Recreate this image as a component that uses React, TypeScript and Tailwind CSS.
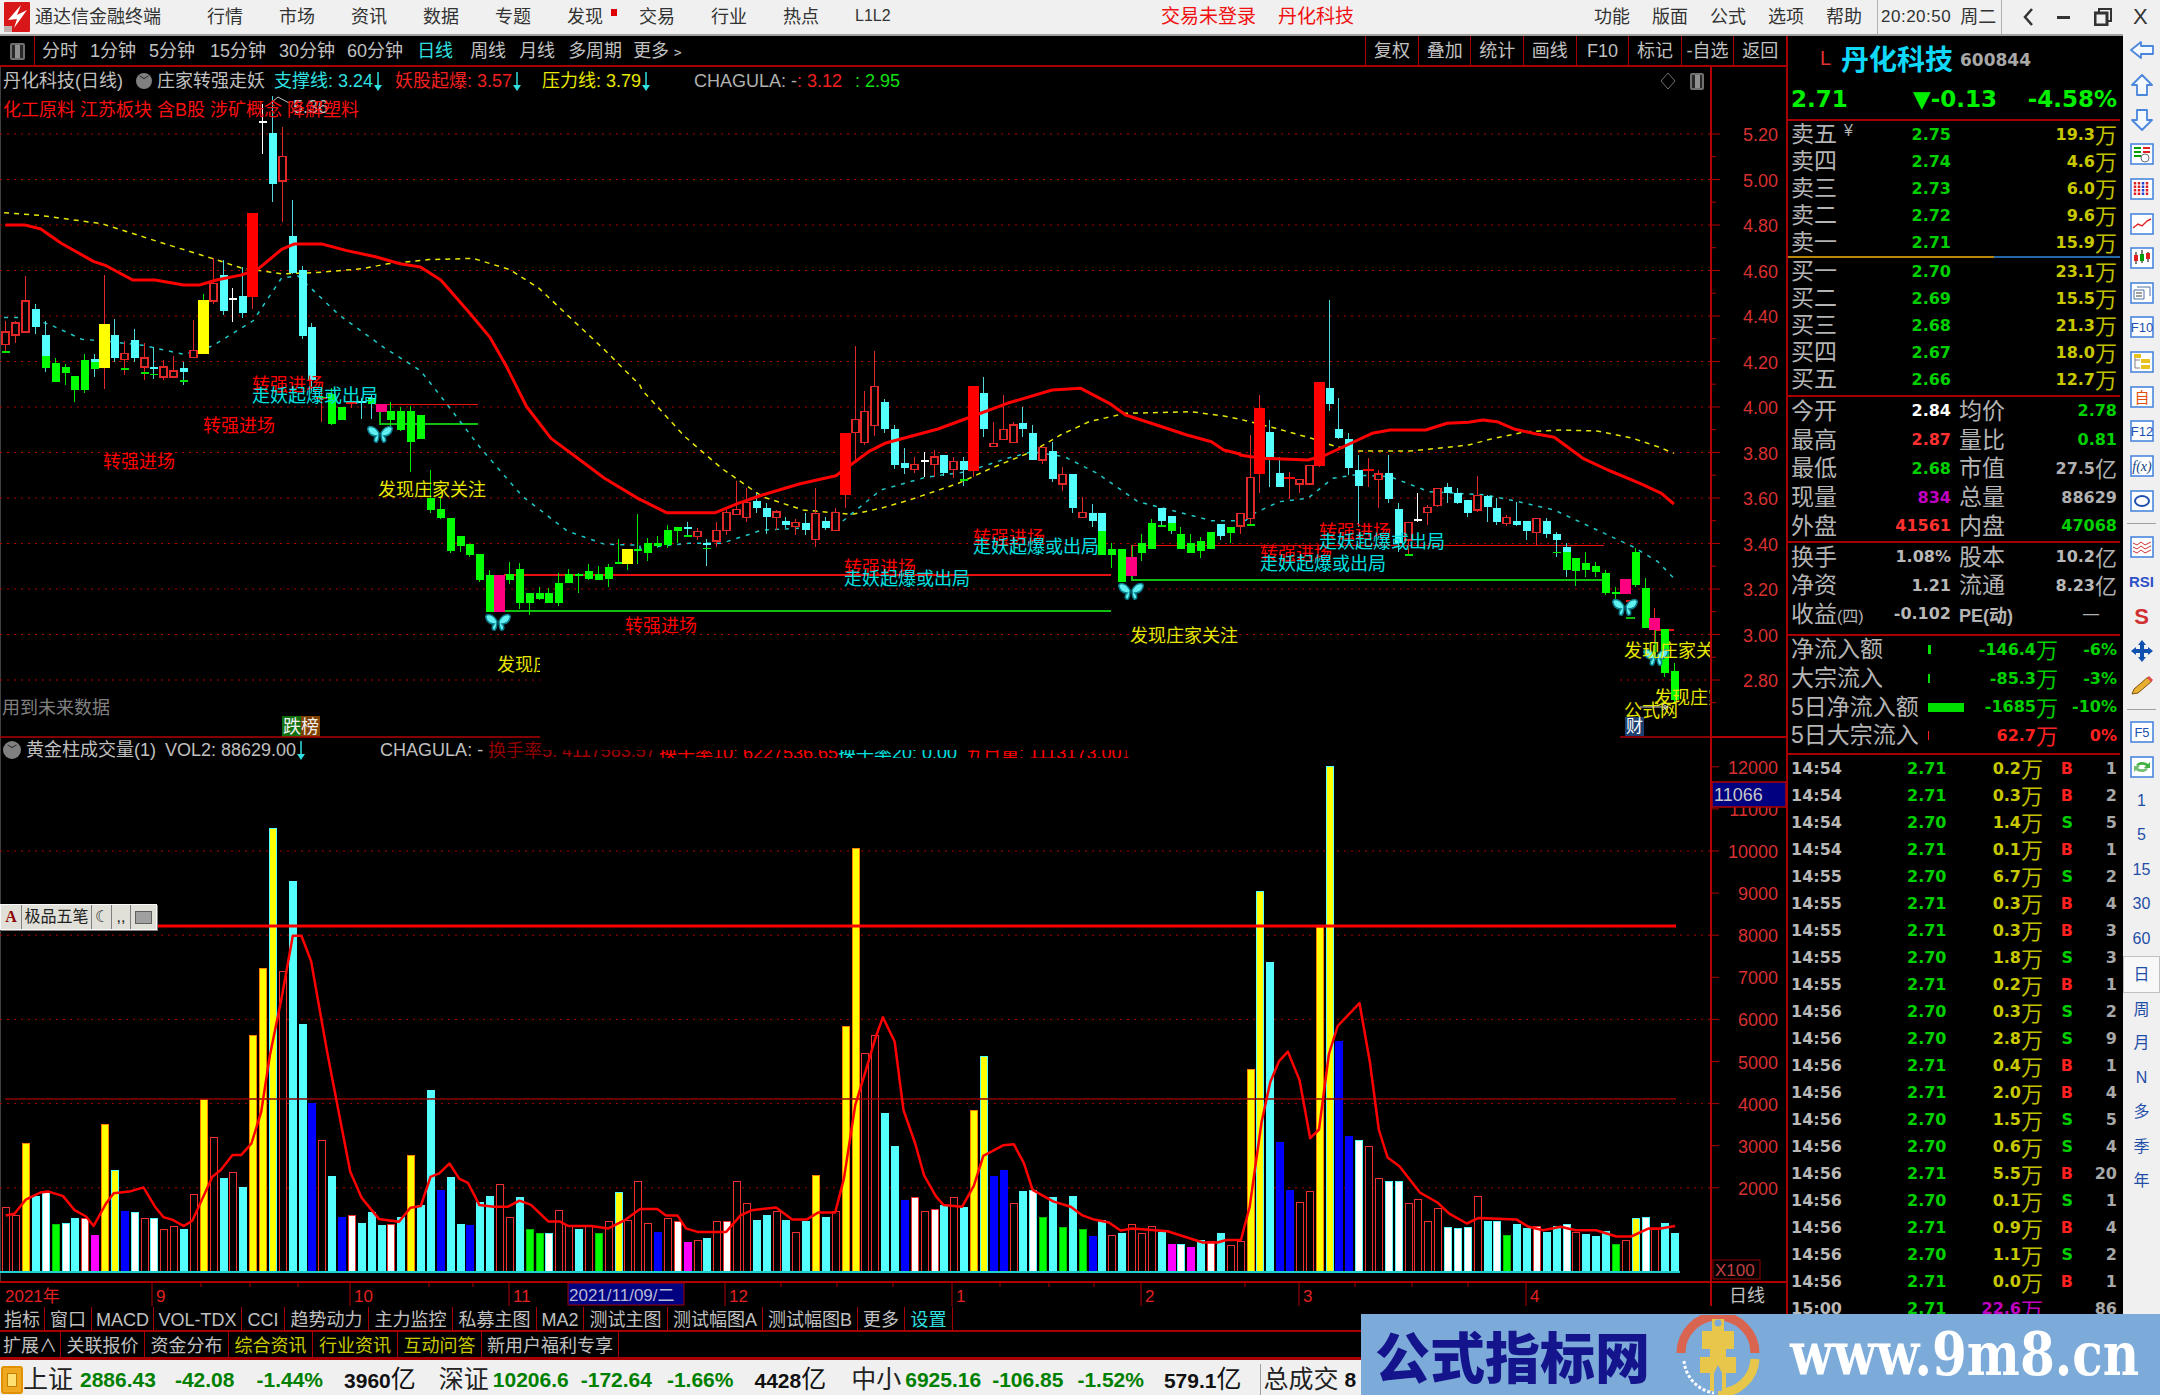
import React from "react";

type C = [string, number, number, number, number, number?, number?];

const A: C[] = [
  ["r",590,618,648,668,665],["r",590,595,625,645],["r",481,541,618,620],["c",550,562,605,622],["x",590,624,705,715,0,676],
  ["g",680,694,740,740],["g",695,702,719,748],["g",725,725,760,788],["g",672,686,760,767],["x",672,684,707,727,0,690],
  ["y",478,598,705,758],["c",585,625,680,690],["r",640,670,685,722,706],["c",610,636,682,690],["r",645,681,703,735,716],
  ["c",655,702,706,733,720],["r",685,703,728,735],["r",675,713,728,730],["c",692,706,716,748,736],["r",587,663,680,680],
  ["Y",525,540,671,671],["r",437,498,541,548],["c",442,478,565,575],["w",510,535,537,593],["c",458,530,572,583],
  ["s",326,326,531,560],["w",60,100,102,182],["c",40,131,255,300],["r",115,188,247,347],["c",295,381,474,475],
  ["c",455,466,626,635],["c",595,606,735,760],["s",760,776,778,838,776],["g",755,770,843,845],["g",800,800,833,833],
  ["s",775,790,792,803],["c",780,786,788,830],["x",770,780,795,830,0,782],["p",794,794,814,814],["g",790,812,833,848],
  ["g",800,812,858,860],["g",798,812,887,960],["g",820,820,880,880],["g",955,1025,1053,1060],["g",1020,1050,1072,1075],
  ["g",1073,1073,1153,1160],["g",1117,1117,1142,1157],["g",1138,1138,1164,1168],["g",1161,1161,1226,1230],["g",1200,1212,1303,1303],
  ["p",1212,1212,1303,1303],["g",1180,1210,1226,1235],["g",1183,1198,1282,1295],["g",1257,1257,1282,1310],["g",1242,1257,1272,1275],
  ["g",1245,1257,1282,1282],["g",1208,1232,1282,1288],["g",1198,1210,1233,1233],["g",1208,1210,1212,1257],["g",1185,1202,1222,1225],
  ["g",1190,1210,1226,1226],["g",1185,1192,1222,1242],["g",1125,1180,1186,1186],["Y",1150,1150,1186,1200],["g",1063,1148,1152,1185],
];
const B: C[] = [
  ["g",775,790,820,843],["g",768,790,798,805],["g",735,750,795,805],["g",741,741,752,790],["c",727,741,748,768,765],
  ["r",745,755,770,780],["c",778,788,792,857,803],["r",727,751,783,802],["r",690,697,752,765],["r",603,688,703,705],
  ["r",625,668,712,725],["c",640,662,685,698],["c",670,683,712,762],["r",690,696,712,750],["c",710,722,735,745],
  ["r",718,728,740,765],["c",700,728,750,765],["r",625,700,778,802],["c",710,722,745,750],["r",685,697,752,752],
  ["s",458,458,645,685],["r",197,418,458,540],["r",332,395,487,495],["r",214,319,436,468],["c",358,367,447,460],
  ["c",434,448,555,568],["c",503,550,565,582],["r",530,553,568,578],["w",516,539,541,592],["r",510,531,553,590],
  ["c",525,525,578,588],["r",530,545,568,595],["c",530,543,570,618,598],["s",318,318,572,590],["c",290,340,447,470],
  ["r",425,490,500,500],["r",345,449,478,478],["r",425,435,487,487],["c",380,430,447,470],["c",435,458,540,540],
  ["r",503,503,540,552],["c",487,512,597,605],["r",560,583,612,632],["c",583,583,685,700],["r",650,697,712,712],
  ["c",673,700,722,740],["x",700,700,826,826,0,752],["g",790,808,825,865],["g",808,808,905,905],["p",795,830,888,888],
  ["g",763,790,820,843],["g",718,728,808,808],["c",683,683,722,738,735],["x",708,708,752,762,0,730],["g",740,763,807,807],
  ["g",763,790,820,820],["g",770,782,812,835],["g",755,755,807,807],["c",733,733,767,780],["g",740,740,758,790],
  ["r",700,700,738,762],
];
const D: C[] = [
  ["r",465,592,715,735,732],["s",345,384,582,640],["c",420,457,530,622],["c",530,578,620,622],["s",575,592,598,658],
  ["r",597,598,612,640],["r",557,557,612,615],["s",305,305,558,560],["c",60,325,372,392],["c",355,448,474,476],
  ["c",458,477,565,585],["c",525,570,618,740],["s",535,566,572,620],["r",570,582,598,685],["c",525,578,658,668],
  ["c",668,687,790,815],["r",728,728,780,825,823],["w",640,716,718,725],["r",675,682,698,735],["r",625,625,677,680],
  ["c",610,622,640,668],["c",625,640,668,672],["c",660,660,698,712],["r",588,647,690,697],["c",645,648,680,725],
  ["c",655,683,725,735],["r",705,713,730,738],["c",665,723,735,738],["c",723,723,752,780],["r",715,715,757,795],
  ["c",715,722,762,775],["c",755,763,780,832,815],["x",790,800,870,892,0,815],["g",835,835,873,918],["g",817,848,870,892],
  ["g",845,858,875,892],["g",870,880,938,945],["g",920,935,940,960],["p",898,898,942,942],["g",805,817,915,922],
  ["g",895,925,1045,1045],["p",983,1015,1050,1090],["g",1047,1047,1178,1190],["g",1150,1172,1260,1270],
];

const CANDLES: C[] = [
  ...A.map((c) => conv(c, (z) => 80 + z / 2.45)),
  ...B.map((c) => conv(c, (z) => 280 + z / 3)),
  ...D.map((c) => conv(c, (z) => 280 + z / 3)),
];

function conv(c: C, f: (z: number) => number): C {
  return [c[0], f(c[1]), f(c[2]), f(c[3]), f(c[4]), c[5] ? f(c[5]) : undefined, c[6] ? f(c[6]) : undefined];
}

const VOL =
  "h1331 h1355 o1150 c1300 w1290 g1382 w1377 c1365 W1365 m1412 o1095 Y1228 b1343 w1347 h1365 w1365 h1395 h1387 c1394 h1296 o1025 h1134 c1250 h1233 c1275 o843 o650 Y252 h660 c402 c812 b1035 h1142 c1245 b1360 W1355 c1377 c1347 c1385 W1380 c1360 o1185 c1328 c1000 b1283 c1248 c1382 b1385 c1318 c1300 h1267 h1361 c1305 g1394 g1407 w1407 h1340 h1385 c1394 h1385 g1407 h1373 Y1291 h1370 h1258 h1378 b1403 h1365 W1373 m1432 h1425 c1420 h1373 W1373 h1258 h1322 c1368 c1355 h1345 c1368 h1405 c1372 o1240 c1360 h1345 o817 o308 h893 h843 c1065 c1158 b1313 W1305 h1345 W1338 c1327 h1305 c1333 o1057 Y902 b1245 b1228 h1322 c1287 w1283 g1360 c1305 g1388 c1300 g1394 b1415 c1370 h1412 c1406 h1382 h1406 h1387 c1405 m1437 w1437 m1445 c1425 W1430 c1406 h1442 h1430 o940 Y431 c633 b1147 b1284 h1318 h1288 o533 Y76 b858 b1130 w1140 h1158 h1250 w1257 w1257 h1322 h1310 h1373 h1335 w1390 w1393 w1390 h1301 c1372 w1372 g1412 c1382 c1392 W1387 c1405 c1387 w1382 h1405 c1410 c1416 c1400 g1437 h1425 Y1365 w1360 h1395 c1378 c1406"
    .split(" ")
    .map((s) => ({ t: s[0], y: 740 + Number(s.slice(1)) / 2.85 }));

const VS: Record<string, [string, string]> = {
  h: ["#000000", "#f03030"],
  c: ["#54ffff", "#54ffff"],
  w: ["#ffffff", "#54ffff"],
  W: ["#ffffff", "#f03030"],
  o: ["#ffff00", "#ff8000"],
  Y: ["#ffff00", "#54ffff"],
  b: ["#0000ff", "#0000ff"],
  g: ["#00ff00", "#00c000"],
  m: ["#ff00ff", "#ff00ff"],
};

function pts(list: number[][], fx: (x: number) => number, fy: (y: number) => number) {
  return list.map(([x, y]) => `${fx(x).toFixed(1)},${fy(y).toFixed(1)}`).join(" ");
}
const ax = (z: number) => z / 2.45;
const ay = (z: number) => 80 + z / 2.45;
const bx = (z: number) => 640 + z / 2.45;
const by = (z: number) => 280 + z / 3;
const cx = (z: number) => 1240 + z / 2.8;

function tri(a: number[][], b: number[][], c: number[][]) {
  return [pts(a, ax, ay), pts(b, bx, by), pts(c, cx, by)].join(" ");
}

const RED_MA = tri(
  [[13,355],[60,355],[100,365],[150,400],[230,445],[260,455],[325,490],[380,490],[450,502],[490,502],[530,490],[590,478],[630,465],[690,415],[720,402],[790,402],[850,418],[920,433],[980,450],[1030,458],[1080,490],[1150,570],[1200,630],[1240,700],[1290,800],[1350,878],[1440,945],[1480,975],[1568,1028]],
  [[0,658],[65,698],[185,698],[240,670],[300,645],[390,612],[480,587],[560,515],[600,490],[730,447],[790,420],[900,370],[1010,330],[1080,325],[1150,370],[1190,405],[1260,433],[1340,465],[1400,485],[1430,510],[1470,522]],
  [[0,525],[60,535],[190,540],[240,525],[330,480],[370,460],[420,450],[520,450],[580,430],[640,427],[680,420],[720,425],[770,448],[830,462],[880,472],[960,535],[1030,570],[1120,610],[1180,640],[1215,672]]
);
const YEL_MA = tri(
  [[10,325],[100,332],[250,352],[400,400],[520,437],[590,460],[690,475],[770,472],[890,462],[950,450],[1050,440],[1160,437],[1250,465],[1320,510],[1400,585],[1480,660],[1568,748]],
  [[5,330],[110,470],[200,565],[300,650],[400,690],[520,703],[590,685],[660,660],[780,610],[860,565],[960,515],[1030,465],[1100,425],[1190,400],[1350,395],[1430,408],[1470,418]],
  [[0,418],[100,445],[200,475],[270,500],[330,513],[480,513],[640,495],[700,478],[800,455],[900,450],[1000,453],[1100,475],[1170,500],[1215,520]]
);
const CY_MA = tri(
  [[10,582],[60,582],[120,598],[200,635],[260,640],[350,650],[450,672],[520,652],[620,590],[690,485],[730,480],[830,575],[940,655],[1030,712],[1080,775],[1180,905],[1280,1020],[1390,1105],[1480,1137],[1568,1140]],
  [[0,805],[120,790],[200,790],[300,750],[480,740],[590,630],[700,592],[800,575],[900,535],[960,515],[1040,530],[1120,580],[1220,665],[1300,690],[1400,722],[1470,722]],
  [[0,735],[40,700],[110,665],[190,655],[260,595],[320,585],[420,590],[530,635],[690,645],[780,665],[880,690],[1000,750],[1100,800],[1170,845],[1215,895]]
);
const vx1 = (z: number) => z / 1.742;
const vx2 = (z: number) => 880 + z / 1.704;
const vy = (z: number) => 740 + z / 2.85;
const VOL_MA =
  pts([[10,1355],[25,1350],[45,1310],[70,1290],[85,1287],[110,1300],[130,1340],[150,1358],[163,1385],[185,1320],[198,1292],[225,1287],[250,1275],[270,1330],[285,1360],[300,1367],[320,1385],[335,1370],[370,1245],[385,1225],[405,1183],[420,1183],[438,1150],[455,1060],[470,900],[490,740],[510,558],[525,558],[542,630],[570,890],[590,1060],[610,1230],[630,1305],[660,1365],[695,1373],[715,1333],[733,1328],[750,1245],[765,1235],[783,1207],[800,1250],[815,1262],[835,1325],[860,1330],[885,1330],[905,1313],[925,1325],[955,1372],[975,1372],[990,1385],[1030,1385],[1060,1392],[1090,1367],[1115,1337],[1145,1337],[1160,1355],[1180,1355],[1195,1392],[1215,1402],[1265,1402],[1290,1355],[1310,1340],[1352,1332],[1380,1367],[1405,1367],[1425,1347],[1455,1347],[1470,1250],[1490,1040],[1505,960],[1525,850]], vx1, vy) +
  " " +
  pts([[5,790],[25,860],[40,1055],[60,1150],[75,1240],[95,1300],[108,1325],[140,1330],[160,1270],[176,1185],[210,1155],[228,1152],[245,1205],[260,1282],[295,1315],[325,1330],[345,1355],[365,1367],[390,1375],[410,1398],[430,1392],[490,1400],[550,1432],[575,1432],[590,1425],[615,1425],[630,1330],[650,1090],[665,975],[680,915],[695,888],[715,970],[733,1135],[748,1110],[765,895],[780,815],[817,750],[835,920],[850,1110],[865,1190],[885,1215],[920,1290],[950,1318],[970,1350],[1000,1378],[1020,1362],[1085,1367],[1105,1387],[1130,1397],[1160,1387],[1185,1397],[1220,1397],[1255,1415],[1280,1415],[1310,1392],[1330,1392],[1355,1385]], vx2, vy);

const LABELS: [string, number, number, string][] = [
  ["转强进场", 252, 384, "#ff0000"],
  ["走妖起爆或出局", 252, 395, "#00e0e0"],
  ["转强进场", 203, 425, "#ff0000"],
  ["转强进场", 103, 461, "#ff0000"],
  ["发现庄家关注", 378, 489, "#e6e600"],
  ["转强进场", 844, 567, "#ff0000"],
  ["走妖起爆或出局", 844, 578, "#00e0e0"],
  ["转强进场", 973, 537, "#ff0000"],
  ["走妖起爆或出局", 973, 546, "#00e0e0"],
  ["转强进场", 625, 625, "#ff0000"],
  ["发现庄家关注", 1130, 635, "#e6e600"],
  ["转强进场", 1260, 553, "#ff0000"],
  ["走妖起爆或出局", 1260, 563, "#00e0e0"],
  ["转强进场", 1319, 531, "#ff0000"],
  ["走妖起爆或出局", 1319, 541, "#00e0e0"],
];

const FLY: [number, number][] = [[380, 435], [498, 623], [1131, 592], [1625, 608], [1656, 658]];

function Butterfly({ x, y }: { x: number; y: number }) {
  return (
    <g transform={`translate(${x} ${y})`} fill="#5ff0f0" stroke="#0c7f8f" strokeWidth="1.5">
      <path d="M-1,-2 C-6,-11 -14,-9 -12,-5 C-11,-1 -8,1 -4,1 C-7,4 -6,8 -3,7 C-1,5 -1,2 -1,-2 Z" />
      <path d="M1,-2 C6,-11 14,-9 12,-5 C11,-1 8,1 4,1 C7,4 6,8 3,7 C1,5 1,2 1,-2 Z" />
    </g>
  );
}

const PRICE = ["5.20","5.00","4.80","4.60","4.40","4.20","4.00","3.80","3.60","3.40","3.20","3.00","2.80"];

function Candle({ c, i }: { c: C; i: number }) {
  const x = Math.round(5.3 + 9.875 * i);
  const [t, hi, top, bot, lo, tick, split] = c;
  const wick =
    t === "g" ? "#00e800" : t === "c" || t === "x" ? "#50d8d8" : t === "w" ? "#ffffff" : t === "y" || t === "r" || t === "s" || t === "p" ? "#e02828" : "#00e800";
  const h = Math.max(bot - top, 2);
  return (
    <g shapeRendering="crispEdges">
      <line x1={x + 0.5} x2={x + 0.5} y1={hi} y2={lo} stroke={wick} strokeWidth="1" />
      {t === "r" && <rect x={x - 3} y={top} width={7} height={h} fill="#000" stroke="#e02828" strokeWidth="1.5" />}
      {t === "s" && <rect x={x - 5} y={top} width={11} height={h} fill="#ff0000" />}
      {t === "c" && <rect x={x - 3} y={top} width={8} height={h} fill="#54ffff" />}
      {t === "g" && <rect x={x - 3} y={top} width={8} height={h} fill="#00ff00" />}
      {(t === "y" || t === "Y") && <rect x={x - 5} y={top} width={11} height={h} fill="#ffff00" />}
      {t === "p" && <rect x={x - 5} y={top} width={11} height={h} fill="#ff0080" />}
      {t === "w" && <rect x={x - 3} y={top} width={8} height={2} fill="#ffffff" />}
      {t === "x" && split && (
        <>
          <rect x={x - 3} y={top} width={8} height={split - top} fill="#54ffff" />
          <rect x={x - 3} y={split} width={8} height={bot - split} fill="#00ff00" />
        </>
      )}
      {tick && <rect x={x - 3} y={tick} width={8} height={1.5} fill="#00e800" />}
    </g>
  );
}

function Charts() {
  return (
    <svg width={1786} height={1240} viewBox="0 67 1786 1240" className="block bg-black">
      <defs>
        <clipPath id="clipA"><rect x="0" y="640" width="540" height="60" /></clipPath>
        <clipPath id="clipB"><rect x="1600" y="620" width="111" height="117" /></clipPath>
        <clipPath id="clipH"><rect x="540" y="750" width="1100" height="8" /></clipPath>
      </defs>
      <line x1="0.5" x2="0.5" y1="67" y2="1282" stroke="#404040" />
      {PRICE.map((p, k) => {
        const y = 134 + 45.5 * k;
        return (
          <g key={p}>
            {k < 12 ? (
              <line x1="0" x2="1711" y1={y} y2={y} stroke="#b00000" strokeDasharray="2 5" />
            ) : (
              <>
                <line x1="0" x2="540" y1={y} y2={y} stroke="#b00000" strokeDasharray="2 5" />
                <line x1="1620" x2="1711" y1={y} y2={y} stroke="#b00000" strokeDasharray="2 5" />
              </>
            )}
            <line x1="1711" x2="1720" y1={y} y2={y} stroke="#b00000" />
            <line x1="1711" x2="1716" y1={y + 22.7} y2={y + 22.7} stroke="#b00000" />
            <text x="1778" y={y + 7} textAnchor="end" fontSize="18" fill="#d83030" fontFamily="Liberation Sans">{p}</text>
          </g>
        );
      })}
      <g shapeRendering="crispEdges" strokeWidth="1.5" fill="none">
        <path d="M375 404.5H478 M504 575H1111 M1132 545.5H1604 M1626 601H1635 M1655 630H1674" stroke="#e81010" />
        <path d="M380 411V424H478 M490 611H1111 M1132 545V580H1602 M1626 618H1635 M1655 630V660" stroke="#10c010" />
      </g>
      <polyline points={YEL_MA} fill="none" stroke="#e6e600" strokeWidth="1.5" strokeDasharray="5 5" />
      <polyline points={CY_MA} fill="none" stroke="#20c8c8" strokeWidth="1.5" strokeDasharray="4 6" />
      {CANDLES.map((c, i) => <Candle key={i} c={c} i={i} />)}
      <polyline points={RED_MA} fill="none" stroke="#ff0000" strokeWidth="3" strokeLinejoin="round" />
      {FLY.map(([x, y], i) => <Butterfly key={i} x={x} y={y} />)}
      {LABELS.map(([s, x, y, c], i) => (
        <text key={i} x={x} y={y + 7} fontSize="18" fill={c} fontFamily="Noto Sans CJK SC">{s}</text>
      ))}
      <text x="497" y="671" fontSize="18" fill="#e6e600" fontFamily="Noto Sans CJK SC" clipPath="url(#clipA)">发现庄家关注</text>
      <g clipPath="url(#clipB)" fontFamily="Noto Sans CJK SC" fontSize="18" fill="#e6e600">
        <text x="1624" y="657">发现庄家关注</text>
        <text x="1654" y="704">发现庄家关注</text>
      </g>
      <text x="1624" y="717" fontSize="18" fill="#e6e600" fontFamily="Noto Sans CJK SC">公式网</text>
      <rect x="1625" y="717" width="19" height="19" fill="#1c3f70" />
      <text x="1626" y="732" fontSize="17" fill="#ffffff" fontFamily="Noto Sans CJK SC">财</text>
      <path d="M1640 707H1668M1662 704L1668 707L1662 710" stroke="#d0d0d0" fill="none" />
      <path d="M272 102L278 97L289 103" stroke="#c0c0c0" fill="none" />
      <text x="293" y="113" fontSize="18" fill="#c0c0c0" fontFamily="Liberation Sans">5.36</text>
      <text x="2" y="714" fontSize="18" fill="#808080" fontFamily="Noto Sans CJK SC">用到未来数据</text>
      <rect x="282" y="716" width="19" height="21" fill="#107010" />
      <rect x="301" y="716" width="19" height="21" fill="#804000" />
      <text x="283" y="733" fontSize="18" fill="#f0f0f0" fontFamily="Noto Sans CJK SC">跌榜</text>

      <path d="M0 737H540 M1620 737H1711" stroke="#b00000" strokeWidth="1.5" />

      {[2000, 4000, 6000, 8000, 10000].map((v) => {
        const y = 1272 - v * 0.0421;
        return <line key={v} x1="0" x2="1711" y1={y} y2={y} stroke="#b00000" strokeDasharray="2 5" />;
      })}
      {[2000,3000,4000,5000,6000,7000,8000,9000,10000,11000,12000].map((v) => {
        const y = 1272 - v * 0.0421;
        return (
          <g key={v}>
            <line x1="1711" x2="1719" y1={y} y2={y} stroke="#b00000" />
            <text x="1778" y={y + 7} textAnchor="end" fontSize="18" fill="#d83030" fontFamily="Liberation Sans">{v}</text>
          </g>
        );
      })}
      {VOL.map((b, i) => {
        const x = Math.round(5.3 + 9.875 * i);
        const [f, s] = VS[b.t];
        return <rect key={i} x={x - 3} y={b.y} width={7} height={1272 - b.y} fill={f} stroke={s} shapeRendering="crispEdges" />;
      })}
      <line x1="0" x2="1680" y1="1272" y2="1272" stroke="#20d0d0" strokeWidth="2" />
      <line x1="157" x2="1676" y1="926" y2="926" stroke="#ff0000" strokeWidth="3" />
      <line x1="5" x2="1676" y1="1099" y2="1099" stroke="#900000" strokeWidth="1.5" />
      <polyline points={VOL_MA} fill="none" stroke="#ff0000" strokeWidth="2.5" strokeLinejoin="round" />
      <rect x="1712" y="782" width="74" height="25" fill="#000080" stroke="#b00000" strokeWidth="1.5" />
      <text x="1714" y="801" fontSize="18" fill="#c8c8c8" fontFamily="Liberation Sans">11066</text>
      <rect x="1713" y="1260" width="47" height="19" fill="none" stroke="#900000" />
      <text x="1715" y="1276" fontSize="17" fill="#c04040" fontFamily="Liberation Sans">X100</text>

      <line x1="1711" x2="1711" y1="67" y2="1306" stroke="#b00000" strokeWidth="2" />
      <line x1="0" x2="1786" y1="1282" y2="1282" stroke="#b00000" strokeWidth="2" />
      <line x1="1711" x2="1786" y1="737" y2="737" stroke="#b00000" strokeWidth="2" />

      <text x="488" y="757" fontSize="18" fill="#900000" fontFamily="Noto Sans CJK SC">换手率</text>
      <g clipPath="url(#clipH)" fontFamily="Liberation Sans, Noto Sans CJK SC" fontSize="18">
        <text x="542" y="757" fill="#a00000">5: 4117583.57</text>
        <text x="659" y="759" fill="#ff0000">换手率10: 6227536.65</text>
        <text x="838" y="759" fill="#00e0e0">换手率20: 0.00</text>
        <text x="965" y="759" fill="#ff0000">五日量: 1113173.00↓</text>
      </g>

      {[[5,"2021年"],[156,"9"],[354,"10"],[513,"11"],[729,"12"],[956,"1"],[1145,"2"],[1303,"3"],[1530,"4"]].map(([x, s]) => (
        <text key={String(s)} x={x as number} y="1302" fontSize="17" fill="#e02020" fontFamily="Liberation Sans, Noto Sans CJK SC">{s as string}</text>
      ))}
      {[152,350,509,725,952,1141,1299,1526].map((x) => <line key={x} x1={x} x2={x} y1="1282" y2="1306" stroke="#b00000" />)}
      {[201,250,298,429,473,781,837,893,1000,1049,1094,1245,1355,1412,1468].map((x) => <line key={x} x1={x} x2={x} y1="1282" y2="1287" stroke="#b00000" />)}
      <rect x="568" y="1283" width="116" height="22" fill="#000080" stroke="#a00000" />
      <text x="569" y="1301" fontSize="17" fill="#b8b8d8" fontFamily="Liberation Sans, Noto Sans CJK SC">2021/11/09/二</text>
      <text x="1729" y="1302" fontSize="18" fill="#c0c0c0" fontFamily="Noto Sans CJK SC">日线</text>
    </svg>
  );
}

function Down({ c }: { c: string }) {
  return (
    <svg width="8" height="20" viewBox="0 0 8 20" className="inline-block ml-[1px] align-middle">
      <path d="M4 0V14" stroke={c} strokeWidth="1.5" />
      <path d="M0 13H8L4 19Z" fill={c} />
    </svg>
  );
}

function Row({ h, children }: { h: string; children: React.ReactNode }) {
  return <div className={`${h} flex items-center`}>{children}</div>;
}

const Num = ({ c, children, w }: { c: string; children: React.ReactNode; w?: string }) => (
  <span className={`font-['DejaVu_Sans','Noto_Sans_CJK_SC',sans-serif] font-bold text-[16px] leading-none text-right ${w ?? ""}`} style={{ color: c }}>{children}</span>
);
const Lab = ({ children, w }: { children: React.ReactNode; w?: string }) => (
  <span className={`text-[23px] leading-none text-[#b4b4b4] whitespace-nowrap ${w ?? ""}`}>{children}</span>
);
const Wan = ({ c = "#c0c000", t = "万" }: { c?: string; t?: string }) => (
  <span className="text-[22px] leading-none -mt-[3px] font-normal font-['Noto_Sans_CJK_SC',sans-serif]" style={{ color: c }}>{t}</span>
);

const BOOK1 = [["卖五","2.75","19.3"],["卖四","2.74","4.6"],["卖三","2.73","6.0"],["卖二","2.72","9.6"],["卖一","2.71","15.9"]];
const BOOK2 = [["买一","2.70","23.1"],["买二","2.69","15.5"],["买三","2.68","21.3"],["买四","2.67","18.0"],["买五","2.66","12.7"]];
const G = "#00d000";
const STATS: [string, string, string, string, string][] = [
  ["今开","2.84","#ffffff","均价","2.78"],
  ["最高","2.87","#ff3030","量比","0.81"],
  ["最低","2.68",G,"市值","27.5亿"],
  ["现量","834","#c000c0","总量","88629"],
  ["外盘","41561","#ff3030","内盘","47068"],
];
const STAT2C = ["#00d000","#00d000","#b0b0b0","#b0b0b0","#00d000"];
const STATS2 = [["换手","1.08%","股本","10.2亿"],["净资","1.21","流通","8.23亿"],["收益(四)","-0.102","PE(动)","—"]];
const FLOW: [string, number, string, string, string][] = [
  ["净流入额",3,"-146.4","-6%",G],
  ["大宗流入",1.5,"-85.3","-3%",G],
  ["5日净流入额",36,"-1685","-10%",G],
  ["5日大宗流入",1,"62.7","0%","#ff2020"],
];
const TICKS = "54 2.71 0.2 B 1|54 2.71 0.3 B 2|54 2.70 1.4 S 5|54 2.71 0.1 B 1|55 2.70 6.7 S 2|55 2.71 0.3 B 4|55 2.71 0.3 B 3|55 2.70 1.8 S 3|55 2.71 0.2 B 1|56 2.70 0.3 S 2|56 2.70 2.8 S 9|56 2.71 0.4 B 1|56 2.71 2.0 B 4|56 2.70 1.5 S 5|56 2.70 0.6 S 4|56 2.71 5.5 B 20|56 2.70 0.1 S 1|56 2.71 0.9 B 4|56 2.70 1.1 S 2|56 2.71 0.0 B 1"
  .split("|").map((s) => s.split(" "));

function RightPanel() {
  return (
    <div className="w-[336px] h-full bg-black border-l-2 border-[#a80000] flex flex-col overflow-hidden pl-[3px] pr-[5px]">
      <div className="h-[44px] shrink-0 flex items-center pl-[29px]">
        <span className="text-[20px] text-[#e03030] w-[21px]">L</span>
        <span className="text-[28px] font-bold text-[#10d8f8] leading-none font-['Noto_Sans_CJK_SC',sans-serif]">丹化科技</span>
        <span className="ml-[7px] mt-[5px] font-['DejaVu_Sans',sans-serif] font-bold text-[17px] text-[#a8a8a8]">600844</span>
      </div>
      <div className="h-[39px] shrink-0 flex items-center font-['DejaVu_Sans',sans-serif] font-bold text-[23px] text-[#00f000] leading-none">
        <span className="w-[122px]">2.71</span>
        <span className="flex-1 text-[#00f000]">▼-0.13</span>
        <span>-4.58%</span>
      </div>
      <div className="-mx-[3px] h-[2px] bg-[#a80000] shrink-0" />
      {BOOK1.map(([a, b, c], i) => (
        <Row key={a} h="h-[27px] shrink-0">
          <Lab w="w-[90px]">{a}{i === 0 && <span className="text-[16px] ml-[7px] align-top">¥</span>}</Lab>
          <Num c={G} w="w-[70px]">{b}</Num>
          <span className="flex-1 flex items-center justify-end"><Num c="#c8c800">{c}</Num><Wan /></span>
        </Row>
      ))}
      <div className="-mx-[3px] h-[2px] shrink-0 flex"><div className="w-[206px] bg-[#b8860b]" /><div className="flex-1 bg-[#2468a8]" /></div>
      {BOOK2.map(([a, b, c]) => (
        <Row key={a} h="h-[27px] shrink-0">
          <Lab w="w-[90px]">{a}</Lab>
          <Num c={G} w="w-[70px]">{b}</Num>
          <span className="flex-1 flex items-center justify-end"><Num c="#c8c800">{c}</Num><Wan /></span>
        </Row>
      ))}
      <div className="-mx-[3px] mt-[2px] h-[2px] bg-[#a80000] shrink-0" />
      {STATS.map(([a, b, bc, c, d], i) => (
        <Row key={a} h="h-[28.75px] shrink-0">
          <Lab w="w-[50px]">{a}</Lab>
          <Num c={bc} w="w-[110px]">{b}</Num>
          <Lab w="ml-[8px] w-[50px]">{c}</Lab>
          <span className="flex-1 flex items-center justify-end">
            <Num c={STAT2C[i]}>{d.replace("亿", "")}</Num>
            {d.endsWith("亿") && <Wan c="#b0b0b0" t="亿" />}
          </span>
        </Row>
      ))}
      <div className="-mx-[3px] h-[2px] bg-[#a80000] shrink-0" />
      {STATS2.map(([a, b, c, d]) => (
        <Row key={a} h="h-[28.6px] shrink-0">
          <Lab w="w-[72px]">{a.startsWith("收益") ? <>收益<span className="text-[16px]">(四)</span></> : a}</Lab>
          <Num c="#b8b8b8" w="w-[88px]">{b}</Num>
          <Lab w="ml-[8px] w-[58px]">{c.startsWith("PE") ? <span className="font-bold text-[18px]">PE(动)</span> : c}</Lab>
          <span className="flex-1 flex items-center justify-end">
            {d === "—" ? <span className="text-[#b0b0b0] mr-[18px]">—</span> : <><Num c="#b8b8b8">{d.replace("亿", "")}</Num><Wan c="#b0b0b0" t="亿" /></>}
          </span>
        </Row>
      ))}
      <div className="-mx-[3px] mt-[5px] h-[2px] bg-[#a80000] shrink-0" />
      {FLOW.map(([a, bar, v, p, c]) => (
        <Row key={a} h="h-[28.7px] shrink-0">
          <Lab w="w-[137px] text-[23.5px]">{a}</Lab>
          <span className="w-[40px] flex items-center">
            <span className="h-[9px] block" style={{ width: bar, background: c === G ? "#00e000" : "#ff2020" }} />
          </span>
          <span className="w-[90px] shrink-0 flex items-center justify-end"><Num c={c}>{v}</Num><Wan c={c} /></span>
          <span className="flex-1 text-right"><Num c={c}>{p}</Num></span>
        </Row>
      ))}
      <div className="-mx-[3px] mt-[3px] h-[2px] bg-[#a80000] shrink-0" />
      {TICKS.map(([m, p, v, k, n], i) => (
        <Row key={i} h="h-[27.04px] shrink-0">
          <Num c="#b8b8b8" w="w-[54px] !text-left">14:{m}</Num>
          <span className="w-[62px]" />
          <Num c={G} w="w-[42px] !text-left">{p}</Num>
          <span className="w-[94px] flex items-center justify-end"><Num c="#c8c800">{v}</Num><Wan /></span>
          <span className="w-[30px] text-right"><Num c={k === "B" ? "#ff2020" : G}>{k}</Num></span>
          <span className="flex-1 text-right"><Num c="#a8a8a8">{n}</Num></span>
        </Row>
      ))}
      <Row h="h-[27.04px] shrink-0">
        <Num c="#b8b8b8" w="w-[54px] !text-left">15:00</Num>
        <span className="w-[62px]" />
        <Num c={G} w="w-[42px] !text-left">2.71</Num>
        <span className="w-[94px] flex items-center justify-end"><Num c="#c000c0">22.6</Num><Wan c="#c000c0" /></span>
        <span className="w-[30px]" />
        <span className="flex-1 text-right"><Num c="#a8a8a8">86</Num></span>
      </Row>
    </div>
  );
}

const BLUE = "#4a86dc";
function Box({ children }: { children: React.ReactNode }) {
  return (
    <svg width="24" height="22" viewBox="0 0 24 22">
      <rect x="1" y="1" width="22" height="20" fill="#fff" stroke={BLUE} strokeWidth="1.6" />
      {children}
    </svg>
  );
}
function Arrow({ d }: { d: string }) {
  return (
    <svg width="26" height="24" viewBox="0 0 26 24">
      <path d={d} fill="#f4f8ff" stroke={BLUE} strokeWidth="1.8" strokeLinejoin="round" />
    </svg>
  );
}
const Bt = ({ children }: { children: React.ReactNode }) => (
  <text x="12" y="16" textAnchor="middle" fontSize="13" fontWeight="400" fill="#2050b0" fontFamily="Liberation Sans, Noto Sans CJK SC">{children}</text>
);

const SIDE: React.ReactNode[] = [
  <Arrow d="M2 12L12 4V8H24V16H12V20Z" />,
  <Arrow d="M13 2L23 12H18V22H8V12H3Z" />,
  <Arrow d="M13 22L23 12H18V2H8V12H3Z" />,
  <Box><path d="M4 5H11M4 9H11M4 13H11" stroke="#00a000" strokeWidth="2" /><path d="M13 5H20M13 9H20" stroke="#e02020" strokeWidth="2" /><circle cx="15" cy="15" r="4" fill="none" stroke="#707070" /></Box>,
  <Box><path d="M5 4V18M9 4V18" stroke="#e02020" strokeWidth="2.5" strokeDasharray="2.5 1" /><path d="M13 4V18" stroke="#2040d0" strokeWidth="2.5" strokeDasharray="2.5 1" /><path d="M17 4V18" stroke="#e02020" strokeWidth="2.5" strokeDasharray="2.5 1" /></Box>,
  <Box><path d="M3 15L8 11L12 13L17 8L21 6" stroke="#e02020" fill="none" strokeWidth="1.4" /></Box>,
  <Box><path d="M6 5V17M12 3V16M18 5V15" stroke="#000" /><rect x="4" y="8" width="4" height="6" fill="#e02020" /><rect x="10" y="7" width="4" height="7" fill="#00a000" /><rect x="16" y="6" width="4" height="6" fill="#e02020" /></Box>,
  <Box><path d="M4 8H14V17H4Z M7 5H20V14" fill="none" stroke="#5070a0" /><path d="M6 11H12M6 14H12" stroke="#404040" /></Box>,
  <Box><Bt>F10</Bt></Box>,
  <Box><path d="M5 4V17H10M5 9H10" stroke="#808080" fill="none" /><rect x="4" y="3" width="7" height="4" fill="#e8c020" /><rect x="11" y="8" width="9" height="4" fill="#e8c020" /><rect x="11" y="14" width="9" height="4" fill="#e8c020" /></Box>,
  <Box><text x="12" y="17" textAnchor="middle" fontSize="15" fill="#e05010" fontFamily="Noto Sans CJK SC">自</text></Box>,
  <Box><Bt>F12</Bt></Box>,
  <Box><text x="12" y="16" textAnchor="middle" fontSize="14" fontStyle="italic" fill="#104080" fontFamily="Liberation Serif">f(x)</text></Box>,
  <Box><ellipse cx="12" cy="11" rx="7" ry="5" fill="none" stroke="#2050b0" strokeWidth="2" /></Box>,
  "sep",
  <Box><path d="M3 7L7 9L11 6L15 9L21 6M3 11L7 13L11 10L15 13L21 10M3 15L7 17L11 14L15 17L21 14" stroke="#d03030" fill="none" /></Box>,
  <span className="text-[15px] font-bold text-[#3050c8]">RSI</span>,
  <span className="text-[22px] font-bold text-[#d03030] leading-none">S</span>,
  <svg width="26" height="24" viewBox="0 0 26 24"><path d="M13 1L17 6H15V10H19V8L24 12L19 16V14H15V18H17L13 23L9 18H11V14H7V16L2 12L7 8V10H11V6H9Z" fill="#1050b0" /></svg>,
  <svg width="26" height="24" viewBox="0 0 26 24"><path d="M3 20L5 15L19 3L23 7L9 19Z" fill="#e8b030" stroke="#805010" /><path d="M19 3L23 7" stroke="#e05050" strokeWidth="3" /></svg>,
  "sep",
  <Box><Bt>F5</Bt></Box>,
  <Box><path d="M6 9A7 5 0 0 1 18 8L20 6V12H14L16 10A5 3 0 0 0 8 10Z" fill="#40b040" /><path d="M18 13A7 5 0 0 1 6 14L4 16V10H10L8 12A5 3 0 0 0 16 12Z" fill="#70c070" /></Box>,
];
const SIDE2: [string, number][] = [["1",34],["5",34],["15",35],["30",34],["60",35],["日",37],["周",33],["月",34],["N",35],["多",34],["季",35],["年",34]];

function Sidebar() {
  return (
    <div className="w-[37px] h-full bg-[#f0f0f0] flex flex-col items-center -mt-[3px] overflow-visible">
      {SIDE.map((n, i) =>
        n === "sep" ? (
          <div key={i} className="h-[12px] w-full flex items-center px-[4px]"><div className="h-[1px] w-full bg-[#a0a0a0]" /></div>
        ) : (
          <div key={i} className="h-[34.65px] shrink-0 flex items-center justify-center">{n}</div>
        )
      )}
      {SIDE2.map(([s, h], i) => (
        <div key={s} style={{ height: h }} className={`w-full shrink-0 flex items-center justify-center text-[16px] text-[#1f4ea8] ${i === 5 ? "bg-[#f8f8f8] border border-[#c0c0c0]" : ""}`}>{s}</div>
      ))}
    </div>
  );
}

const TABS1: [string, number, string?][] = [["指标",45],["窗口",47],["MACD",62],["VOL-TDX",88],["CCI",43],["趋势动力",84],["主力监控",84],["私募主图",84],["MA2",47],["测试主图",84],["测试幅图A",95],["测试幅图B",95],["更多",47],["设置",48,"text-[#30e0e0]"]];
const TABS2: [string, number, string?][] = [["扩展∧",61],["关联报价",84],["资金分布",84],["综合资讯",84,"text-[#c8c800]"],["行业资讯",85,"text-[#c8c800]"],["互动问答",84,"text-[#c8c800]"],["新用户福利专享",137]];

function TabRow({ tabs, h }: { tabs: [string, number, string?][]; h: string }) {
  return (
    <div className={`${h} flex bg-black border-b-2 border-[#a80000] shrink-0`}>
      {tabs.map(([s, w, c]) => (
        <div key={s} style={{ width: w }} className={`h-full shrink-0 border-r border-[#a80000] flex items-center justify-center pt-[3px] text-[18px] whitespace-nowrap ${c ?? "text-[#c0c0c0]"}`}>{s}</div>
      ))}
    </div>
  );
}

const TOOL: [string, number, string?][] = [["分时",42],["1分钟",12],["5分钟",13],["15分钟",15],["30分钟",13],["60分钟",12],["日线",14,"text-[#30e0e0]"],["周线",17],["月线",13],["多周期",13],["更多﹥",11]];
const TOOLR = ["复权","叠加","统计","画线","F10","标记","-自选","返回"];

function Status({ t, c, ml, u }: { t: string; c: string; ml: number; u?: string }) {
  return (
    <span style={{ marginLeft: ml, color: c }} className="font-bold text-[21px] whitespace-nowrap leading-none">
      {t}
      {u && <span className="text-[25px] font-normal">{u}</span>}
    </span>
  );
}

export default function App() {
  const GN = "#008000";
  return (
    <div className="w-[2160px] h-[1395px] relative overflow-hidden bg-black flex flex-col font-['Liberation_Sans','Noto_Sans_CJK_SC',sans-serif]">
      <div className="h-[36px] shrink-0 bg-[#f0f0f0] border-b-2 border-[#a0a0a0] flex items-center text-[18px] text-[#333]">
        <svg width="28" height="30" viewBox="0 0 28 30" className="ml-[4px] shrink-0">
          <rect width="26" height="30" fill="#d81818" rx="1" />
          <path d="M4 18L17 3L13 13L23 8L10 26L13 17Z" fill="#fff" />
          <rect y="24" width="8" height="6" fill="#c0b0b0" />
        </svg>
        <span className="ml-[3px] text-[18px]">通达信金融终端</span>
        <div className="ml-[46px] flex gap-[36px]">
          {["行情","市场","资讯","数据","专题"].map((s) => <span key={s}>{s}</span>)}
          <span className="relative">发现<span className="absolute -right-[14px] top-[5px] w-[6px] h-[7px] bg-[#e00000]" /></span>
          {["交易","行业","热点"].map((s) => <span key={s}>{s}</span>)}
          <span className="text-[16px] w-[36px] whitespace-nowrap">L1L2</span>
        </div>
        <span className="ml-[270px] text-[#f01010] text-[19px]">交易未登录</span>
        <span className="ml-[22px] text-[#f01010] text-[19px]">丹化科技</span>
        <div className="ml-[240px] flex gap-[22px]">
          {["功能","版面","公式","选项","帮助"].map((s) => <span key={s}>{s}</span>)}
        </div>
        <div className="ml-[15px] h-full border-x border-[#b0b0b0] flex items-center px-[3px] w-[125px] whitespace-nowrap">
          <span className="tracking-[0.5px] text-[17px]">20:20:50</span>
          <span className="ml-[9px]">周二</span>
        </div>
        <div className="flex items-center ml-[21px]">
          <svg width="10" height="18" viewBox="0 0 10 18"><path d="M9 1L2 9L9 17" fill="none" stroke="#333" strokeWidth="2.5" /></svg>
          <span className="ml-[24px] w-[13px] h-[3px] bg-[#333]" />
          <svg width="18" height="18" viewBox="0 0 18 18" className="ml-[24px]"><path d="M5 4V1H17V13H13" fill="none" stroke="#333" strokeWidth="2" /><rect x="1" y="5" width="12" height="12" fill="none" stroke="#333" strokeWidth="3" /></svg>
          <span className="ml-[21px] text-[22px] leading-none">X</span>
        </div>
      </div>

      <div className="flex-1 flex min-h-0">
        <div className="w-[1786px] flex flex-col h-full shrink-0 relative">
          <div className="h-[31px] shrink-0 bg-black border-b-2 border-[#a80000] flex text-[18px] text-[#c0c0c0]">
            <div className="absolute left-0 top-0 w-[35px] h-[31px] border-r border-[#a80000] flex items-center justify-center">
              <span className="w-[15px] h-[17px] border-2 border-[#707070] rounded-[2px] bg-[#282828] flex justify-center"><span className="w-[5px] h-full bg-[#909090]" /></span>
            </div>
            <div className="flex items-center pt-[1px]">
              {TOOL.map(([s, m, c]) => <span key={s} style={{ marginLeft: m }} className={`whitespace-nowrap ${c ?? ""}`}>{s}</span>)}
            </div>
            <div className="ml-auto flex">
              {TOOLR.map((s) => (
                <div key={s} className="w-[52.6px] h-full border-l border-[#a80000] flex items-center justify-center pt-[1px] whitespace-nowrap">{s}</div>
              ))}
            </div>
          </div>
          <div className="relative shrink-0">
            <Charts />
            <div className="absolute left-[3px] top-[3px] flex items-center text-[18px] leading-[22px] text-[#c0c0c0] whitespace-nowrap">
              <span className="w-[133px]">丹化科技(日线)</span>
              <span className="w-[16px] h-[16px] rounded-full bg-[#808080] text-black flex items-center justify-center text-[10px]">﹀</span>
              <span className="ml-[5px] w-[117px]">庄家转强走妖</span>
              <span className="w-[121px] text-[#30e0e0]">支撑线: 3.24<Down c="#30e0e0" /></span>
              <span className="w-[147px] text-[#f02020]">妖股起爆: 3.57<Down c="#30e0e0" /></span>
              <span className="w-[152px] text-[#e8e800]">压力线: 3.79<Down c="#30e0e0" /></span>
              <span className="w-[103px] text-[#b0b0b0]">CHAGULA: -</span>
              <span className="w-[58px] text-[#f02020]">: 3.12</span>
              <span className="text-[#10e010]">: 2.95</span>
            </div>
            <div className="absolute left-[3px] top-[32px] text-[18px] leading-[22px] text-[#f81010] whitespace-nowrap">化工原料 江苏板块 含B股 涉矿概念 降解塑料</div>
            <div className="absolute left-[1660px] top-[5px] flex items-center gap-[14px]">
              <svg width="16" height="18" viewBox="0 0 16 18"><path d="M8 1L15 9L8 17L1 9Z" fill="none" stroke="#707070" /></svg>
              <span className="w-[14px] h-[17px] border-2 border-[#707070] rounded-[2px] bg-[#282828] flex justify-center"><span className="w-[5px] h-full bg-[#909090]" /></span>
            </div>
            <div className="absolute left-[3px] top-[672px] flex items-center text-[18px] leading-[22px] text-[#c0c0c0] whitespace-nowrap">
              <span className="w-[18px] h-[18px] rounded-full bg-[#808080] text-black flex items-center justify-center text-[10px]">﹀</span>
              <span className="ml-[5px]">黄金柱成交量(1)</span>
              <span className="ml-[9px]">VOL2: 88629.00<Down c="#30e0e0" /></span>
              <span className="ml-[75px]">CHAGULA: -</span>
            </div>
            <div className="absolute left-0 top-[837px] w-[157px] h-[26px] bg-[#e0e0d8] border border-[#f8f8f8] flex items-center text-[16px] text-[#222] shadow-[1px_1px_0_#808080]">
              <span className="w-[21px] text-center text-[#900000] font-bold border-r border-[#808080] font-['Liberation_Serif',serif]">A</span>
              <span className="w-[70px] text-center border-r border-[#808080] whitespace-nowrap overflow-hidden">极品五笔</span>
              <span className="w-[20px] text-center border-r border-[#808080]">☾</span>
              <span className="w-[19px] text-center border-r border-[#808080]">,,</span>
              <span className="flex-1 flex justify-center"><span className="w-[17px] h-[13px] bg-[#a0a0a0] border border-[#606060]" /></span>
            </div>
          </div>
          <TabRow tabs={TABS1} h="h-[25px]" />
          <TabRow tabs={TABS2} h="h-[27px]" />
        </div>
        <div className="w-[337px] shrink-0 h-full overflow-hidden"><RightPanel /></div>
        <Sidebar />
      </div>

      <div className="h-[37px] shrink-0 bg-[#f0f0f0] border-t-2 border-[#a80000] flex items-center pt-[4px] relative">
        <span className="ml-[1px] w-[22px] h-[28px] rounded-[3px] bg-[#f0a820] border-2 border-[#e09000] flex items-center justify-center"><span className="w-[10px] h-[14px] bg-[#ffe070] border border-[#c08000]" /></span>
        <span className="text-[25px] text-[#222] leading-none">上证</span>
        <Status t="2886.43" c={GN} ml={7} />
        <Status t="-42.08" c={GN} ml={19} />
        <Status t="-1.44%" c={GN} ml={22} />
        <Status t="3960" c="#111" ml={21} u="亿" />
        <span className="ml-[23px] text-[25px] text-[#222] leading-none">深证</span>
        <Status t="10206.6" c={GN} ml={4} />
        <Status t="-172.64" c={GN} ml={12} />
        <Status t="-1.66%" c={GN} ml={15} />
        <Status t="4428" c="#111" ml={21} u="亿" />
        <span className="ml-[25px] text-[25px] text-[#222] leading-none">中小</span>
        <Status t="6925.16" c={GN} ml={4} />
        <Status t="-106.85" c={GN} ml={11} />
        <Status t="-1.52%" c={GN} ml={14} />
        <Status t="579.1" c="#111" ml={20} u="亿" />
        <span className="ml-[18px] h-full border-l border-[#a0a0a0] pl-[3px] flex items-center text-[25px] text-[#222] leading-none whitespace-nowrap">总成交</span>
        <Status t="8" c="#111" ml={6} />
      </div>

      <div className="absolute left-[1361px] top-[1314px] w-[799px] h-[81px] bg-[#7dabd9] flex items-center overflow-hidden">
        <span className="ml-[14px] text-[55px] leading-none font-black text-[#14148c] tracking-[0px] font-['Noto_Sans_CJK_SC',sans-serif] whitespace-nowrap">公式指标网</span>
        <svg width="84" height="80" viewBox="0 0 84 80" className="ml-[26px] shrink-0">
          <path d="M5 38A36 36 0 0 1 79 38" fill="none" stroke="#d9644f" strokeWidth="9" />
          <path d="M79 44A36 36 0 0 1 42 78" fill="none" stroke="#e8c64a" strokeWidth="9" />
          <path d="M36 4H48V16H58V34H50V42H60V58H50V76H34V58H24V42H34V34H26V16H36Z" fill="#e8c64a" />
          <circle cx="42" cy="8" r="3.5" fill="#7dabd9" />
          <path d="M38 58L42 50L46 58V76H38Z" fill="#7dabd9" />
          <path d="M8 46A36 36 0 0 0 38 78" fill="none" stroke="#ffffff" strokeWidth="3" strokeDasharray="3 2" />
        </svg>
        <span className="ml-[30px] text-[59px] leading-none font-bold text-white whitespace-nowrap origin-left scale-x-[0.85] font-['DejaVu_Serif',serif]">www.9m8.cn</span>
      </div>
    </div>
  );
}
